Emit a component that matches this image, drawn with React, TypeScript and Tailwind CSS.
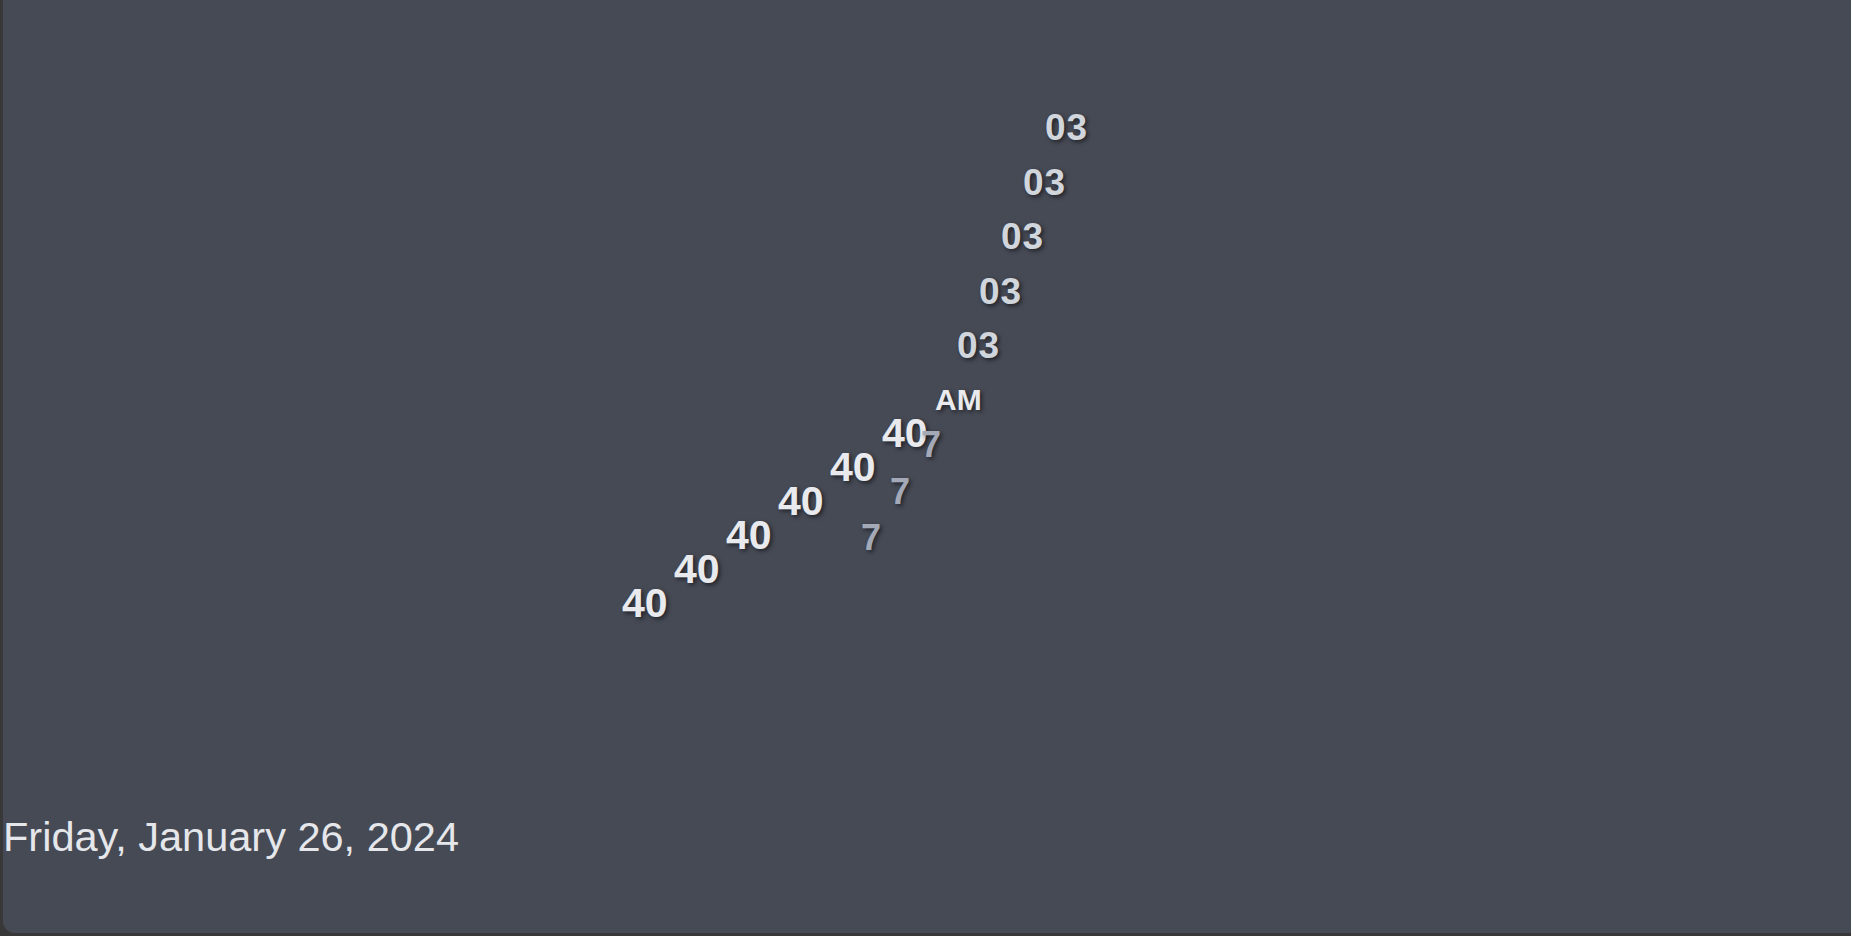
import React from 'react';

// Each piece of the clock sits on a skewed column, so positions are part of the content.
const minutes = [
  'left-[1042px] top-[109px]',
  'left-[1020px] top-[164px]',
  'left-[998px] top-[218px]',
  'left-[976px] top-[273px]',
  'left-[954px] top-[327px]',
];

const seconds = [
  'left-[879px] top-[413px]',
  'left-[827px] top-[447px]',
  'left-[775px] top-[481px]',
  'left-[723px] top-[515px]',
  'left-[671px] top-[549px]',
  'left-[619px] top-[583px]',
];

const ticks = [
  'left-[918px] top-[427px]',
  'left-[887px] top-[474px]',
  'left-[858px] top-[520px]',
];

const shadow = '[text-shadow:2px_2px_4px_rgba(0,0,0,0.55)]';

export default function App() {
  return (
    <div className="h-[936px] w-full overflow-hidden bg-[#383838] pl-[3px] font-['Liberation_Sans',Arial,sans-serif]">
      <div className="relative flex h-[933px] flex-col justify-end rounded-bl-[12px] bg-[#464a55] pb-[76px]">
        {minutes.map((pos, i) => (
          <span key={`m${i}`} className={`absolute ${pos} text-[37px] font-bold leading-none tracking-[1px] text-[#d1d5dc] ${shadow}`}>
            03
          </span>
        ))}
        <span className={`absolute left-[932px] top-[385px] text-[30px] font-bold leading-none text-[#e8eaee] ${shadow}`}>
          AM
        </span>
        {seconds.map((pos, i) => (
          <span key={`s${i}`} className={`absolute ${pos} text-[41px] font-bold leading-none text-[#e8eaee] ${shadow}`}>
            40
          </span>
        ))}
        {ticks.map((pos, i) => (
          <span key={`t${i}`} className={`absolute ${pos} text-[36px] font-bold leading-none text-[#a3a9b7] ${shadow}`}>
            7
          </span>
        ))}
        <div className="text-[41.5px] leading-none text-[#e5e7eb]">Friday, January 26, 2024</div>
      </div>
    </div>
  );
}
